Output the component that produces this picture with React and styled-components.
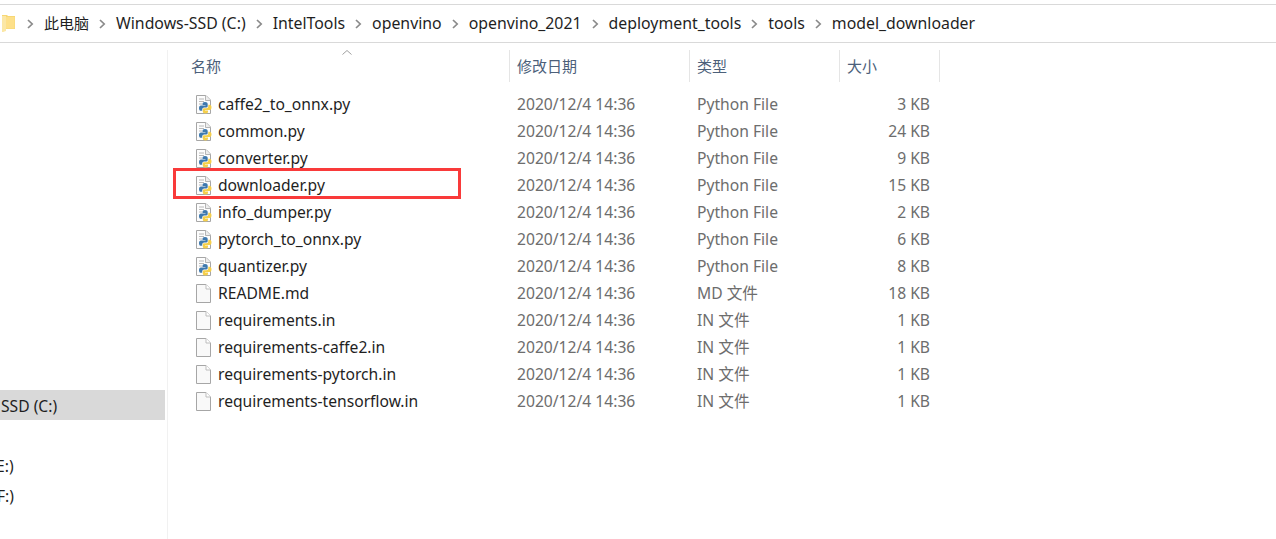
import React from "react";
import styled, { createGlobalStyle } from "styled-components";

const Global = createGlobalStyle`
  html, body { margin: 0; padding: 0; background: #fff; }
  body { font-family: "Noto Sans", "Noto Sans CJK SC", sans-serif; }
`;

const Page = styled.div`
  width: 1276px;
  height: 539px;
  overflow: hidden;
  padding-top: 4px;
  box-sizing: border-box;
  display: flex;
  flex-direction: column;
  background: #fff;
`;

const AddressBar = styled.div`
  height: 37px;
  flex: none;
  box-sizing: content-box;
  border-top: 1px solid #d9d9d9;
  border-bottom: 1px solid #d9d9d9;
  display: flex;
  align-items: center;
  font-size: 15.85px;
  color: #1f1f1f;
  overflow: hidden;
`;

const FolderSlot = styled.span`
  width: 24px;
  margin-left: 2px;
  flex: none;
  display: flex;
`;

const Crumb = styled.span`
  white-space: nowrap;
  position: relative;
  top: -1px;
  font-size: ${(p) => (p.$cjk ? "15px" : "inherit")};
`;

const ChevronSlot = styled.span`
  width: 27px;
  flex: none;
  display: flex;
  justify-content: center;
  margin-left: ${(p) => p.$offset || 0}px;
`;

const Body = styled.div`
  flex: 1;
  display: flex;
  min-height: 0;
`;

const Sidebar = styled.aside`
  width: 168px;
  flex: none;
  box-sizing: border-box;
  margin-top: 7px;
  padding-top: 340px;
  border-right: 1px solid #f1f1f1;
  font-size: 15.65px;
  color: #1f1f1f;
`;

const NavRow = styled.div`
  height: 30px;
  width: 165px;
  box-sizing: border-box;
  padding-top: 2px;
  display: flex;
  align-items: center;
  overflow: hidden;
  white-space: nowrap;
  background: ${(p) => (p.$selected ? "#d9d9d9" : "transparent")};
`;

const NavText = styled.span`
  margin-left: ${(p) => p.$inset}px;
`;

const Main = styled.main`
  flex: 1;
  min-width: 0;
  padding-top: 7px;
  font-size: 15.65px;
`;

const Header = styled.div`
  display: grid;
  grid-template-columns: 342px 180px 150px 100px;
  height: 32px;
  font-size: 15px;
  color: #4c607a;
  margin-bottom: 9px;
  position: relative;
`;

const HeaderCell = styled.div`
  border-right: 1px solid #e5e5e5;
  padding-left: ${(p) => p.$pad}px;
  padding-bottom: 1px;
  display: flex;
  align-items: center;
  box-sizing: border-box;
`;

const SortCaret = styled.svg`
  position: absolute;
  left: 173px;
  top: -1px;
`;

const Row = styled.div`
  display: grid;
  grid-template-columns: 342px 180px 150px 90px;
  height: 27px;
  align-items: center;
  position: relative;
  color: #6d6d6d;
`;

const NameCell = styled.div`
  display: flex;
  align-items: center;
  padding-left: 28px;
  color: #1f1f1f;
  white-space: nowrap;
  height: 27px;
`;

const RowText = styled.span`
  position: relative;
  top: -1px;
`;

const IconSlot = styled.span`
  width: 22px;
  flex: none;
  display: flex;
`;

const DateCell = styled.div`
  padding-left: 7px;
  white-space: nowrap;
`;

const TypeCell = styled.div`
  padding-left: 7px;
  white-space: nowrap;
`;

const SizeCell = styled.div`
  text-align: right;
  white-space: nowrap;
`;

const Highlight = styled.div`
  position: absolute;
  left: 5px;
  top: -4px;
  width: 282px;
  height: 25px;
  border: 3px solid #f93a3a;
  pointer-events: none;
`;

const FolderIcon = () => (
  <svg width="14" height="18" viewBox="0 0 14 18">
    <path d="M0 0H5L6 1H13V14H4L2 16L0 17Z" fill="#f7d774" />
    <path d="M0 1H4V16L1 17H0Z" fill="#fbe7a6" />
    <path d="M4 2H12.5V13.5H4Z" fill="#fde08a" />
  </svg>
);

const Chevron = () => (
  <svg width="7" height="10" viewBox="0 0 7 10">
    <path d="M1 1L5.2 5L1 9" fill="none" stroke="#8a8a8a" strokeWidth="1.7" />
  </svg>
);

const BlankIcon = () => (
  <svg width="16" height="20" viewBox="0 0 16 20">
    <path d="M.5.5H10L14.5 5V18.5H.5Z" fill="#f9f9f9" stroke="#a6a6a6" />
    <path d="M10 .5V5H14.5" fill="#fff" stroke="#bdbdbd" />
  </svg>
);

const PythonIcon = () => (
  <svg width="18" height="20" viewBox="0 0 18 20">
    <path d="M.5.5H10L14.5 5V18.5H.5Z" fill="#fdfdfd" stroke="#a6a6a6" />
    <path d="M9.5.5V5.5H14.5" fill="#eeeeee" stroke="#b5b5b5" />
    <path d="M3 4H8M3 6.5H8M3 9H6" stroke="#b8b8b8" strokeWidth="1" />
    <path
      d="M9 7C6.8 7 6.5 8 6.5 9V10H9.5V10.6H5C3.6 10.6 3 11.8 3 13.2C3 14.8 3.7 15.8 5 15.8H6.2V14.4C6.2 13.2 7.2 12.4 8.2 12.4H10.4C11.2 12.4 11.7 11.8 11.7 11V9C11.7 7.8 10.8 7 9 7Z"
      fill="#3f79ae"
    />
    <path
      d="M9.4 18.6C11.6 18.6 12 17.6 12 16.6V15.6H9V15H13.4C14.8 15 15.5 13.8 15.5 12.4C15.5 10.8 14.8 9.8 13.4 9.8H12.3V11.2C12.3 12.4 11.3 13.2 10.3 13.2H8.1C7.3 13.2 6.8 13.8 6.8 14.6V16.6C6.8 17.8 7.6 18.6 9.4 18.6Z"
      fill="#f5cf4b"
    />
  </svg>
);

const crumbs = [
  "此电脑",
  "Windows-SSD (C:)",
  "IntelTools",
  "openvino",
  "openvino_2021",
  "deployment_tools",
  "tools",
  "model_downloader",
];

const files = [
  ["caffe2_to_onnx.py", "Python File", "3 KB", "py"],
  ["common.py", "Python File", "24 KB", "py"],
  ["converter.py", "Python File", "9 KB", "py"],
  ["downloader.py", "Python File", "15 KB", "py", true],
  ["info_dumper.py", "Python File", "2 KB", "py"],
  ["pytorch_to_onnx.py", "Python File", "6 KB", "py"],
  ["quantizer.py", "Python File", "8 KB", "py"],
  ["README.md", "MD 文件", "18 KB"],
  ["requirements.in", "IN 文件", "1 KB"],
  ["requirements-caffe2.in", "IN 文件", "1 KB"],
  ["requirements-pytorch.in", "IN 文件", "1 KB"],
  ["requirements-tensorflow.in", "IN 文件", "1 KB"],
];

export default function App() {
  return (
    <Page>
      <Global />
      <AddressBar>
        <FolderSlot>
          <FolderIcon />
        </FolderSlot>
        {crumbs.map((c, i) => (
          <React.Fragment key={c}>
            <ChevronSlot $offset={i === 0 ? -9 : 0}>
              <Chevron />
            </ChevronSlot>
            <Crumb $cjk={i === 0}>{c}</Crumb>
          </React.Fragment>
        ))}
      </AddressBar>
      <Body>
        <Sidebar>
          <NavRow $selected>
            <NavText $inset={1}>SSD (C:)</NavText>
          </NavRow>
          <NavRow />
          <NavRow>
            <NavText $inset={-4}>E:)</NavText>
          </NavRow>
          <NavRow>
            <NavText $inset={-3}>F:)</NavText>
          </NavRow>
        </Sidebar>
        <Main>
          <Header>
            <SortCaret width="12" height="7" viewBox="0 0 12 7">
              <path d="M1.5 5.5L6 1.5L10.5 5.5" fill="none" stroke="#a0a0a0" />
            </SortCaret>
            <HeaderCell $pad={23}>名称</HeaderCell>
            <HeaderCell $pad={7}>修改日期</HeaderCell>
            <HeaderCell $pad={7}>类型</HeaderCell>
            <HeaderCell $pad={7}>大小</HeaderCell>
          </Header>
          {files.map(([name, type, size, kind, marked]) => (
            <Row key={name}>
              <NameCell>
                <IconSlot>{kind ? <PythonIcon /> : <BlankIcon />}</IconSlot>
                <RowText>{name}</RowText>
              </NameCell>
              <DateCell>
                <RowText>2020/12/4 14:36</RowText>
              </DateCell>
              <TypeCell>
                <RowText>{type}</RowText>
              </TypeCell>
              <SizeCell>
                <RowText>{size}</RowText>
              </SizeCell>
              {marked && <Highlight />}
            </Row>
          ))}
        </Main>
      </Body>
    </Page>
  );
}
